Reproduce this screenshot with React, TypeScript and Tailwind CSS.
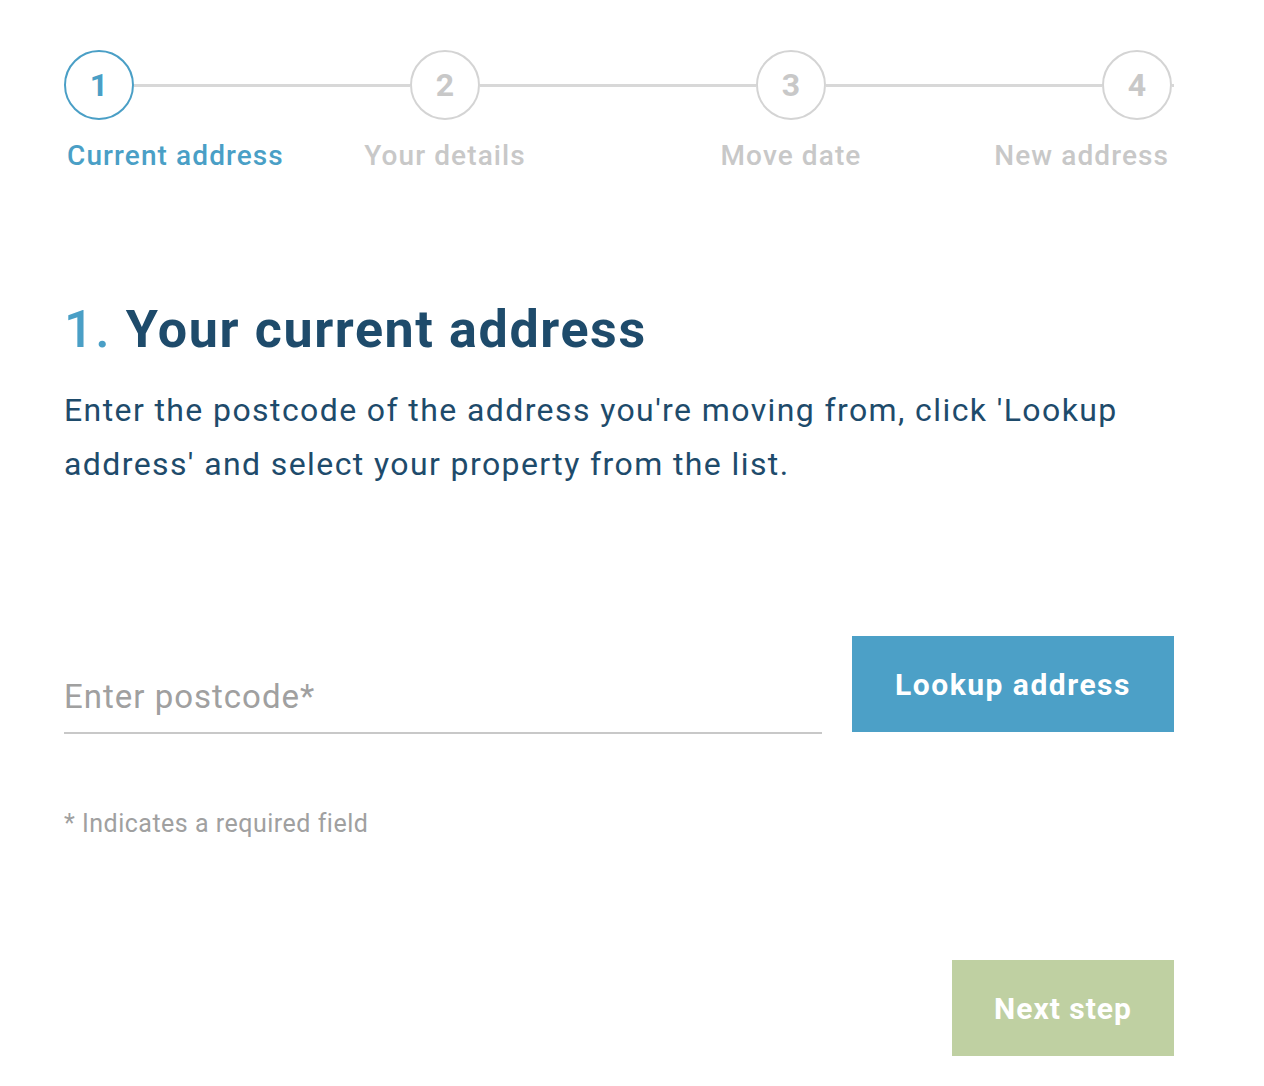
import React from 'react';

const steps = [
  { n: 1, label: 'Current address', align: 'items-start' },
  { n: 2, label: 'Your details', align: 'items-center' },
  { n: 3, label: 'Move date', align: 'items-center' },
  { n: 4, label: 'New address', align: 'items-end' },
];

function Stepper() {
  return (
    <div className="w-[1110px]">
      <div className="flex items-center">
        {steps.map((s, i) => (
          <React.Fragment key={s.n}>
            <div
              className={
                s.n === 1
                  ? 'w-[70px] h-[70px] shrink-0 rounded-full border-2 border-[#4a9fc6] text-[#4a9fc6] flex items-center justify-center text-[32px] font-bold'
                  : 'w-[70px] h-[70px] shrink-0 rounded-full border-2 border-[#d4d4d4] text-[#c8c8c8] flex items-center justify-center text-[32px] font-bold'
              }
            >
              {s.n}
            </div>
            {i < steps.length - 1 ? (
              <div className="flex-1 h-[3px] bg-[#d8d8d8]" />
            ) : (
              <div className="w-[2px] h-[3px] bg-[#d8d8d8]" />
            )}
          </React.Fragment>
        ))}
      </div>
      <div className="flex mt-[16px]">
        {steps.map((s, i) => (
          <React.Fragment key={s.n}>
            <div className={`w-[70px] shrink-0 flex flex-col ${s.align}`}>
              <span
                className={
                  s.n === 1
                    ? 'whitespace-nowrap text-[28px] leading-[40px] font-medium tracking-[1.1px] text-[#4a9fc6] ml-[3px]'
                    : s.n === 4
                    ? 'whitespace-nowrap text-[28px] leading-[40px] font-medium tracking-[1.1px] text-[#c8c8c8] mr-[3px]'
                    : 'whitespace-nowrap text-[28px] leading-[40px] font-medium tracking-[1.1px] text-[#c8c8c8]'
                }
              >
                {s.label}
              </span>
            </div>
            {i < steps.length - 1 ? <div className="flex-1" /> : <div className="w-[2px]" />}
          </React.Fragment>
        ))}
      </div>
    </div>
  );
}

export default function App() {
  return (
    <div className="min-h-screen bg-white font-['Roboto',sans-serif] px-[64px] pt-[50px]">
      <Stepper />

      <h1 className="mt-[124px] text-[52px] leading-[60px] font-bold text-[#1e4b6b] tracking-[1.6px]">
        <span className="text-[#4a9fc6] font-medium">1.</span> Your current address
      </h1>
      <p className="mt-[23px] w-[1110px] text-[32px] leading-[54px] tracking-[1.4px] text-[#1e4b6b]">
        Enter the postcode of the address you're moving from, click 'Lookup address' and select your property from the list.
      </p>

      <div className="mt-[145px] flex items-start w-[1110px] gap-[30px]">
        <div className="w-[758px] h-[98px] border-b-2 border-[#c8c8c8] flex items-end">
          <input
            placeholder="Enter postcode*"
            className="w-full bg-transparent outline-none text-[33px] leading-[40px] pb-[15px] tracking-[1px] text-[#1e4b6b] placeholder:text-[#a0a0a0]"
          />
        </div>
        <button className="w-[322px] h-[96px] bg-[#4ca0c7] text-white text-[30px] font-bold tracking-[1.5px]">
          Lookup address
        </button>
      </div>

      <p className="mt-[73px] text-[25px] leading-[34px] tracking-[0.5px] text-[#a0a0a0]">* Indicates a required field</p>

      <div className="mt-[119px] w-[1110px] flex justify-end">
        <button className="w-[222px] h-[96px] bg-[#bfd0a2] text-white text-[30px] font-bold tracking-[1px]">
          Next step
        </button>
      </div>
    </div>
  );
}
